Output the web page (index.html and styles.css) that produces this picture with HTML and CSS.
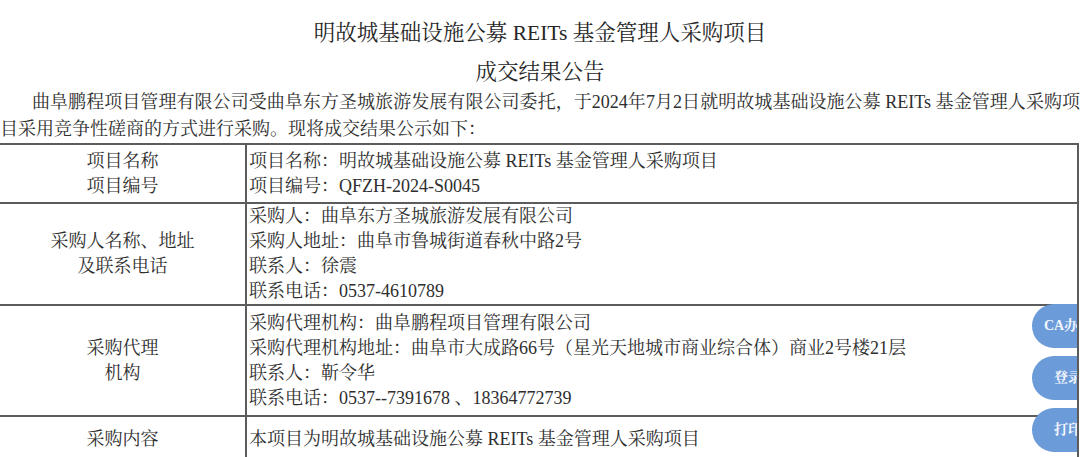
FILE: index.html
```html
<!DOCTYPE html>
<html lang="zh-CN">
<head>
<meta charset="utf-8">
<title>成交结果公告</title>
<link rel="stylesheet" href="styles.css">
</head>
<body>
<div class="doc">
  <h1 class="title">明故城基础设施公募 REITs 基金管理人采购项目</h1>
  <h2 class="subtitle">成交结果公告</h2>
  <p class="intro">曲阜鹏程项目管理有限公司受曲阜东方圣城旅游发展有限公司委托，于2024年7月2日就明故城基础设施公募 REITs 基金管理人采购项目采用竞争性磋商的方式进行采购。现将成交结果公示如下：</p>
  <table class="result">
    <tr class="r1">
      <td class="label">项目名称<br>项目编号</td>
      <td class="value">项目名称：明故城基础设施公募 REITs 基金管理人采购项目<br>项目编号：QFZH-2024-S0045</td>
    </tr>
    <tr class="r2">
      <td class="label">采购人名称、地址<br>及联系电话</td>
      <td class="value">采购人：曲阜东方圣城旅游发展有限公司<br>采购人地址：曲阜市鲁城街道春秋中路2号<br>联系人：徐震<br>联系电话：0537-4610789</td>
    </tr>
    <tr class="r3">
      <td class="label">采购代理<br>机构</td>
      <td class="value">采购代理机构：曲阜鹏程项目管理有限公司<br>采购代理机构地址：曲阜市大成路66号（星光天地城市商业综合体）商业2号楼21层<br>联系人：靳令华<br>联系电话：0537--7391678 、18364772739</td>
    </tr>
    <tr class="r4">
      <td class="label">采购内容</td>
      <td class="value">本项目为明故城基础设施公募 REITs 基金管理人采购项目</td>
    </tr>
  </table>
</div>
<div class="float-bar">
  <div class="float-btn">CA办理</div>
  <div class="float-btn">登录</div>
  <div class="float-btn">打印</div>
</div>
</body>
</html>
```

FILE: styles.css
```css
html, body {
  margin: 0;
  padding: 0;
  background: #ffffff;
  overflow: hidden;
}

body {
  width: 1080px;
  height: 457px;
  position: relative;
  font-family: "Liberation Serif", "Noto Serif CJK SC", "Noto Sans CJK SC", serif;
  color: #2e2e2e;
}

.doc {
  width: 1080px;
}

.title {
  margin: 0;
  padding-top: 17px;
  font-size: 21.5px;
  line-height: 32px;
  font-weight: normal;
  text-align: center;
  color: #262626;
}

.subtitle {
  margin: 7px 0 0 0;
  font-size: 21.5px;
  line-height: 32px;
  font-weight: normal;
  text-align: center;
  color: #262626;
}

.intro {
  margin: 1px 0 0 0;
  font-size: 18px;
  line-height: 27px;
  text-indent: 32px;
  text-align: justify;
}

.result {
  width: 1079px;
  border-collapse: collapse;
  font-size: 18px;
  line-height: 25px;
}

.result td {
  border: 2px solid #5c5c5c;
  padding: 0;
  vertical-align: middle;
}

.result td.label {
  width: 245px;
  border-left: none;
  text-align: center;
}

.result td.value {
  padding-left: 2px;
  text-align: left;
}

.r1 td { height: 57px; }
.r2 td { height: 100px; }
.r3 td { height: 109px; }
.r4 td { height: 44px; }

.float-bar {
  position: absolute;
  top: 304px;
  left: 1032px;
  width: 45px;
  overflow: hidden;
  display: flex;
  flex-direction: column;
  gap: 8px;
}

.float-btn {
  width: 72px;
  height: 44px;
  border-radius: 22px;
  background: #6b9bd9;
  color: #f2f6fc;
  font-family: "Liberation Serif", "Noto Serif CJK SC", "Noto Sans CJK SC", serif;
  font-weight: bold;
  font-size: 14px;
  line-height: 44px;
  text-align: center;
  white-space: nowrap;
}
```
